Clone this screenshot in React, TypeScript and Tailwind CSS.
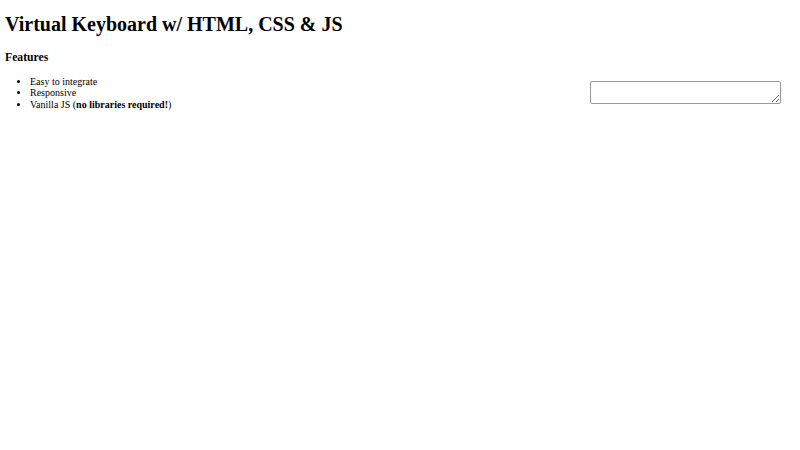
export default function App() {
  return (
    <div className="min-h-[450px] bg-white px-[5px] pt-[13.4px] font-['Liberation_Serif',serif] text-[10px] leading-[1.149] text-black">
      <h1 className="text-[20px] font-bold leading-[1.149]">Virtual Keyboard w/ HTML, CSS &amp; JS</h1>
      <h3 className="mt-[14.2px] text-[11.7px] font-bold leading-[1.149]">Features</h3>
      <div className="mt-[11.9px] flex items-start justify-between">
        <ul className="list-disc pl-[25px]">
          <li>Easy to integrate</li>
          <li>Responsive</li>
          <li>
            Vanilla JS (<b>no libraries required!</b>)
          </li>
        </ul>
        <textarea className="mt-[5px] mr-[14px] h-[23px] w-[191px] rounded-[2px] border border-[#9a9a9a] bg-white" />
      </div>
    </div>
  )
}
